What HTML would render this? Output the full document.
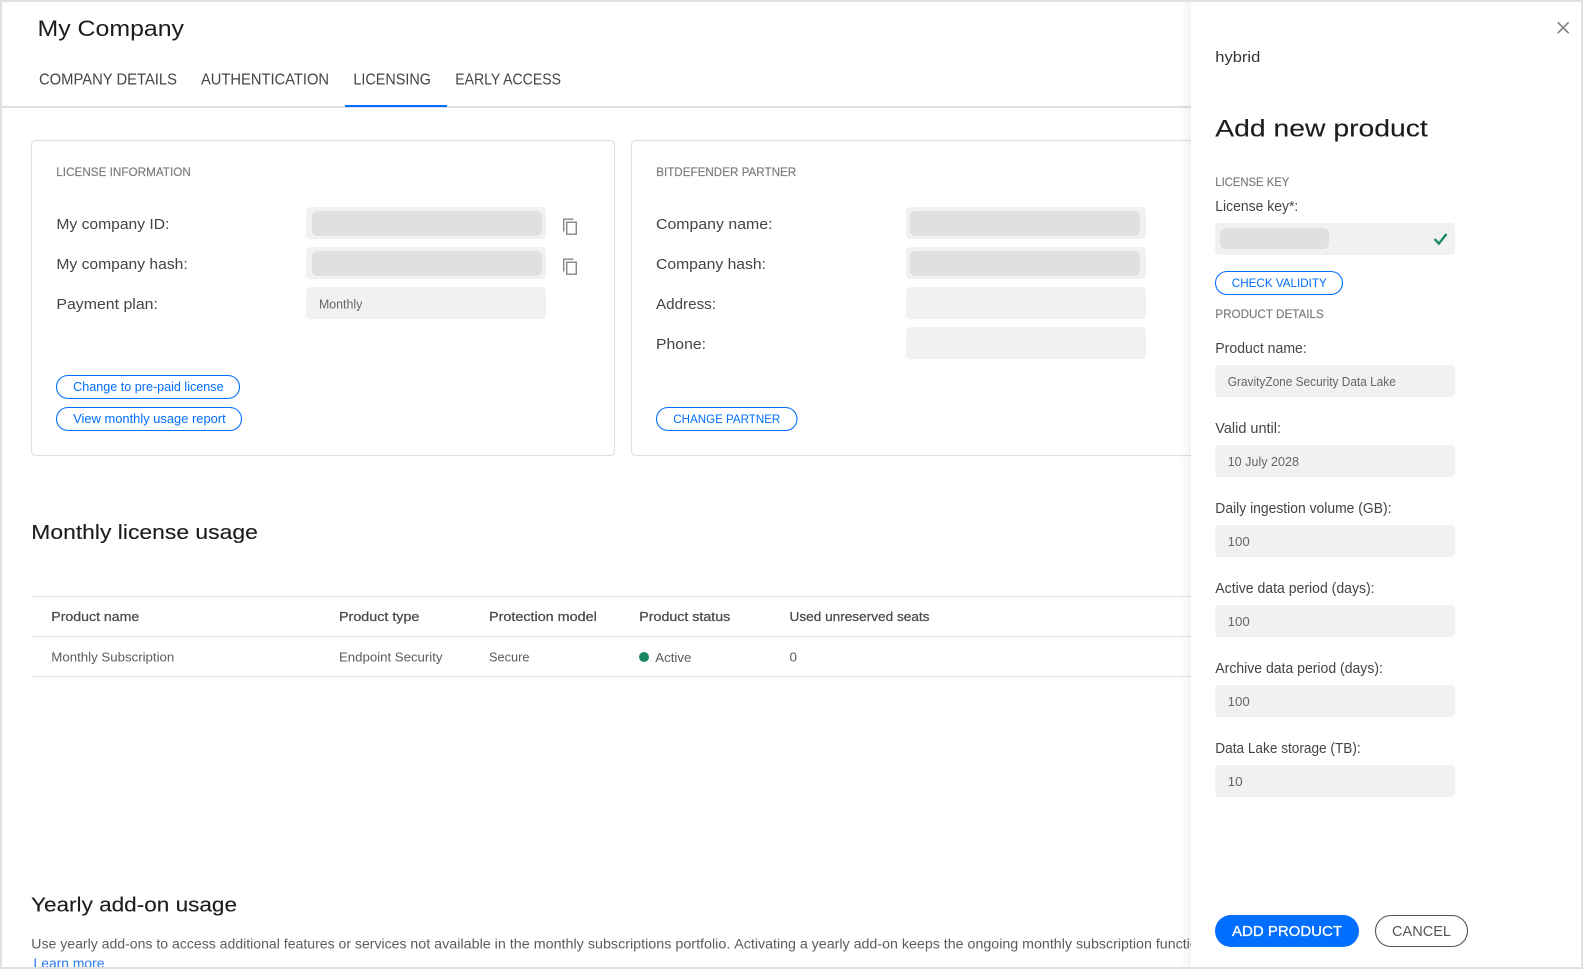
<!DOCTYPE html>
<html lang="en">
<head>
<meta charset="utf-8">
<title>My Company - Licensing</title>
<style>
html,body{margin:0;padding:0;background:#fff;width:1583px;height:969px;overflow:hidden}
svg{display:block;position:absolute;left:0;top:0}
text{font-family:"Liberation Sans",Arial,sans-serif;white-space:pre}
.tab{font-size:15.5px;fill:#444}
.sec{font-size:11.5px;fill:#7a7a7a;stroke:#7a7a7a;stroke-width:.15px}
.lbl{font-size:15px;fill:#444}
.val{font-size:12.5px;fill:#666}
.btn{font-size:12.5px;fill:#006eff}
.h2{font-size:20px;fill:#1c1c1c;stroke:#1c1c1c;stroke-width:.12px}
.th{font-size:13px;fill:#4a4a4a;stroke:#4a4a4a;stroke-width:.25px}
.td{font-size:13px;fill:#5c5c5c}
.pl{font-size:14.5px;fill:#444}
.pv{font-size:13px;fill:#666}
.ds{font-size:14px;fill:#5c5c5c}
</style>
</head>
<body>
<svg width="1583" height="969" viewBox="0 0 1583 969" xmlns="http://www.w3.org/2000/svg">
<defs>
<linearGradient id="sh" x1="0" x2="1" y1="0" y2="0">
<stop offset="0" stop-color="#000" stop-opacity="0"/>
<stop offset="1" stop-color="#000" stop-opacity=".045"/>
</linearGradient>
</defs>
<rect width="1583" height="969" fill="#fff"/>

<!-- Header -->
<text x="37.5" y="36" font-size="22.5" fill="#1c1c1c" textLength="146.5" lengthAdjust="spacingAndGlyphs">My Company</text>
<text class="tab" x="39" y="84.7" textLength="138" lengthAdjust="spacingAndGlyphs">COMPANY DETAILS</text>
<text class="tab" x="201" y="84.7" textLength="128" lengthAdjust="spacingAndGlyphs">AUTHENTICATION</text>
<text class="tab" x="353.4" y="84.7" textLength="77.5" lengthAdjust="spacingAndGlyphs">LICENSING</text>
<text class="tab" x="455.2" y="84.7" textLength="105.8" lengthAdjust="spacingAndGlyphs">EARLY ACCESS</text>
<rect x="0" y="106" width="1583" height="2" fill="#e0e0e0"/>
<rect x="345" y="105" width="102" height="2" fill="#006eff"/>

<!-- License card -->
<rect x="31.5" y="140.5" width="583" height="315" rx="4" fill="#fff" stroke="#e0e0e0" stroke-width="1.2"/>
<text class="sec" x="56.3" y="176" textLength="134.5" lengthAdjust="spacingAndGlyphs">LICENSE INFORMATION</text>
<text class="lbl" x="56.4" y="229" textLength="113" lengthAdjust="spacingAndGlyphs">My company ID:</text>
<text class="lbl" x="56.4" y="269" textLength="131.3" lengthAdjust="spacingAndGlyphs">My company hash:</text>
<text class="lbl" x="56.4" y="309" textLength="101.5" lengthAdjust="spacingAndGlyphs">Payment plan:</text>
<rect x="306" y="207" width="240" height="32" rx="4" fill="#f1f1f1"/>
<rect x="312" y="211" width="230" height="25" rx="6" fill="#e0e0e0"/>
<rect x="306" y="247" width="240" height="32" rx="4" fill="#f1f1f1"/>
<rect x="312" y="251" width="230" height="25" rx="6" fill="#e0e0e0"/>
<rect x="306" y="287" width="240" height="32" rx="4" fill="#f1f1f1"/>
<text class="val" x="319" y="308.5" textLength="43.3" lengthAdjust="spacingAndGlyphs">Monthly</text>
<g fill="none" stroke="#858585" stroke-width="1.4">
<path d="M563.7 231.5V219.2H573.5"/>
<rect x="566.7" y="222.2" width="9.6" height="12"/>
<path d="M563.7 271.5V259.2H573.5"/>
<rect x="566.7" y="262.2" width="9.6" height="12"/>
</g>
<rect x="56.5" y="375.5" width="183" height="23" rx="11.5" fill="#fff" stroke="#006eff" stroke-width="1.1"/>
<text class="btn" x="73.2" y="391" textLength="150.4" lengthAdjust="spacingAndGlyphs">Change to pre-paid license</text>
<rect x="56.5" y="407.5" width="185" height="23" rx="11.5" fill="#fff" stroke="#006eff" stroke-width="1.1"/>
<text class="btn" x="73.2" y="423" textLength="152.5" lengthAdjust="spacingAndGlyphs">View monthly usage report</text>

<!-- Partner card -->
<rect x="631.5" y="140.5" width="700" height="315" rx="4" fill="#fff" stroke="#e0e0e0" stroke-width="1.2"/>
<text class="sec" x="656.2" y="176" textLength="140" lengthAdjust="spacingAndGlyphs">BITDEFENDER PARTNER</text>
<text class="lbl" x="656" y="229" textLength="116.5" lengthAdjust="spacingAndGlyphs">Company name:</text>
<text class="lbl" x="656" y="269" textLength="110" lengthAdjust="spacingAndGlyphs">Company hash:</text>
<text class="lbl" x="656" y="309" textLength="60" lengthAdjust="spacingAndGlyphs">Address:</text>
<text class="lbl" x="656" y="349" textLength="50" lengthAdjust="spacingAndGlyphs">Phone:</text>
<rect x="906" y="207" width="240" height="32" rx="4" fill="#f1f1f1"/>
<rect x="910" y="211" width="230" height="25" rx="6" fill="#e0e0e0"/>
<rect x="906" y="247" width="240" height="32" rx="4" fill="#f1f1f1"/>
<rect x="910" y="251" width="230" height="25" rx="6" fill="#e0e0e0"/>
<rect x="906" y="287" width="240" height="32" rx="4" fill="#f1f1f1"/>
<rect x="906" y="327" width="240" height="32" rx="4" fill="#f1f1f1"/>
<rect x="656.5" y="407.5" width="140.5" height="23" rx="11.5" fill="#fff" stroke="#006eff" stroke-width="1.1"/>
<text class="btn" x="673.3" y="423" textLength="107" lengthAdjust="spacingAndGlyphs" style="font-size:12px">CHANGE PARTNER</text>

<!-- Monthly usage -->
<text class="h2" x="31.3" y="539" textLength="226.5" lengthAdjust="spacingAndGlyphs">Monthly license usage</text>
<rect x="31" y="596" width="1160" height="1" fill="#e0e0e0"/>
<rect x="31" y="636" width="1160" height="1" fill="#e0e0e0"/>
<rect x="31" y="676" width="1160" height="1" fill="#e0e0e0"/>
<text class="th" x="51.3" y="621" textLength="88" lengthAdjust="spacingAndGlyphs">Product name</text>
<text class="th" x="339" y="621" textLength="80.4" lengthAdjust="spacingAndGlyphs">Product type</text>
<text class="th" x="489" y="621" textLength="107.8" lengthAdjust="spacingAndGlyphs">Protection model</text>
<text class="th" x="639.3" y="621" textLength="91" lengthAdjust="spacingAndGlyphs">Product status</text>
<text class="th" x="789.5" y="621" textLength="140" lengthAdjust="spacingAndGlyphs">Used unreserved seats</text>
<text class="td" x="51.3" y="661.5" textLength="123" lengthAdjust="spacingAndGlyphs">Monthly Subscription</text>
<text class="td" x="339" y="661.5" textLength="103.5" lengthAdjust="spacingAndGlyphs">Endpoint Security</text>
<text class="td" x="489" y="661.5" textLength="40.5" lengthAdjust="spacingAndGlyphs">Secure</text>
<circle cx="644" cy="657" r="5" fill="#1a8764"/>
<text class="td" x="655.3" y="662" textLength="36" lengthAdjust="spacingAndGlyphs">Active</text>
<text class="td" x="789.5" y="661.5" textLength="7.5" lengthAdjust="spacingAndGlyphs">0</text>

<!-- Yearly -->
<text class="h2" x="31" y="911.5" textLength="206" lengthAdjust="spacingAndGlyphs">Yearly add-on usage</text>
<text class="ds" x="31.3" y="948.5" textLength="375.2" lengthAdjust="spacingAndGlyphs">Use yearly add-ons to access additional features or services</text>
<text class="ds" x="410.3" y="948.5" textLength="320" lengthAdjust="spacingAndGlyphs">not available in the monthly subscriptions portfolio.</text>
<text class="ds" x="734.3" y="948.5" textLength="73.5" lengthAdjust="spacingAndGlyphs">Activating a</text>
<text class="ds" x="811.7" y="948.5" textLength="394" lengthAdjust="spacingAndGlyphs">yearly add-on keeps the ongoing monthly subscription function</text>
<text x="33.5" y="968" font-size="14" fill="#2a78f0" textLength="71" lengthAdjust="spacingAndGlyphs">Learn more</text>

<!-- Side panel -->
<rect x="1180" y="0" width="11" height="969" fill="url(#sh)"/>
<rect x="1191" y="0" width="392" height="969" fill="#fff"/>
<path d="M1557.7 22.2L1568.7 33.2M1568.7 22.2L1557.7 33.2" stroke="#808080" stroke-width="1.6" fill="none"/>
<text x="1215.3" y="62" font-size="15" fill="#333" textLength="45" lengthAdjust="spacingAndGlyphs">hybrid</text>
<text x="1215.3" y="136.7" font-size="24" fill="#1c1c1c" stroke="#1c1c1c" stroke-width=".12" textLength="212.5" lengthAdjust="spacingAndGlyphs">Add new product</text>
<text class="sec" x="1215.3" y="186" textLength="74" lengthAdjust="spacingAndGlyphs">LICENSE KEY</text>
<text class="pl" x="1215.3" y="211" textLength="83" lengthAdjust="spacingAndGlyphs">License key*:</text>
<rect x="1215" y="223" width="240" height="32" rx="4" fill="#f1f1f1"/>
<rect x="1220" y="228" width="109" height="21" rx="6" fill="#e0e0e0"/>
<path d="M1434.6 239L1438.8 243.6L1446.5 234" fill="none" stroke="#1a8764" stroke-width="2.3"/>
<rect x="1215.5" y="271.5" width="127" height="23" rx="11.5" fill="#fff" stroke="#006eff" stroke-width="1.1"/>
<text class="btn" x="1231.8" y="287" textLength="95" lengthAdjust="spacingAndGlyphs" style="font-size:12px">CHECK VALIDITY</text>
<text class="sec" x="1215.3" y="318" textLength="108.5" lengthAdjust="spacingAndGlyphs">PRODUCT DETAILS</text>

<text class="pl" x="1215.3" y="353" textLength="91.5" lengthAdjust="spacingAndGlyphs">Product name:</text>
<rect x="1215" y="365" width="240" height="32" rx="4" fill="#f1f1f1"/>
<text class="pv" x="1227.8" y="386" textLength="168" lengthAdjust="spacingAndGlyphs">GravityZone Security Data Lake</text>

<text class="pl" x="1215.3" y="433" textLength="65.7" lengthAdjust="spacingAndGlyphs">Valid until:</text>
<rect x="1215" y="445" width="240" height="32" rx="4" fill="#f1f1f1"/>
<text class="pv" x="1227.7" y="466" textLength="71.3" lengthAdjust="spacingAndGlyphs">10 July 2028</text>

<text class="pl" x="1215.3" y="513" textLength="176.2" lengthAdjust="spacingAndGlyphs">Daily ingestion volume (GB):</text>
<rect x="1215" y="525" width="240" height="32" rx="4" fill="#f1f1f1"/>
<text class="pv" x="1227.7" y="546" textLength="22" lengthAdjust="spacingAndGlyphs">100</text>

<text class="pl" x="1215.3" y="593" textLength="159.3" lengthAdjust="spacingAndGlyphs">Active data period (days):</text>
<rect x="1215" y="605" width="240" height="32" rx="4" fill="#f1f1f1"/>
<text class="pv" x="1227.7" y="626" textLength="22" lengthAdjust="spacingAndGlyphs">100</text>

<text class="pl" x="1215.3" y="673" textLength="167.6" lengthAdjust="spacingAndGlyphs">Archive data period (days):</text>
<rect x="1215" y="685" width="240" height="32" rx="4" fill="#f1f1f1"/>
<text class="pv" x="1227.7" y="706" textLength="22" lengthAdjust="spacingAndGlyphs">100</text>

<text class="pl" x="1215.3" y="753" textLength="145.4" lengthAdjust="spacingAndGlyphs">Data Lake storage (TB):</text>
<rect x="1215" y="765" width="240" height="32" rx="4" fill="#f1f1f1"/>
<text class="pv" x="1227.7" y="786" textLength="15" lengthAdjust="spacingAndGlyphs">10</text>

<rect x="1215" y="915" width="144" height="32" rx="16" fill="#006eff"/>
<text x="1232" y="936" font-size="15" fill="#fff" stroke="#fff" stroke-width=".3" textLength="110" lengthAdjust="spacingAndGlyphs">ADD PRODUCT</text>
<rect x="1375.5" y="915.5" width="92" height="31" rx="15.5" fill="#fff" stroke="#555" stroke-width="1.1"/>
<text x="1392" y="936" font-size="15" fill="#555" textLength="59" lengthAdjust="spacingAndGlyphs">CANCEL</text>

<!-- Viewport frame -->
<rect x="1" y="1" width="1581" height="967" fill="none" stroke="#e0e0e0" stroke-width="2"/>
</svg>
</body>
</html>
